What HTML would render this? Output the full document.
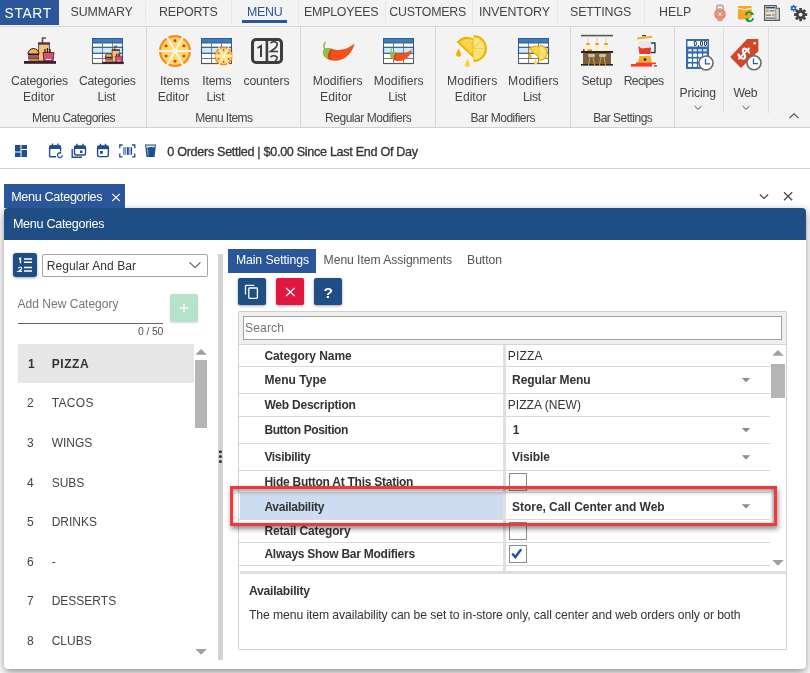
<!DOCTYPE html>
<html><head><meta charset="utf-8">
<style>
html,body{margin:0;padding:0;}
body{will-change:transform;width:810px;height:673px;position:relative;overflow:hidden;background:#fff;font-family:"Liberation Sans",sans-serif;}
.t{position:absolute;white-space:nowrap;line-height:1;}
.r{position:absolute;}
.a{position:absolute;}
</style></head><body>
<div class="r" style="left:0px;top:0px;width:810px;height:26px;background:#f3f3f3;"></div>
<div class="r" style="left:0px;top:26px;width:810px;height:1px;background:#d6d6d6;"></div>
<div class="r" style="left:0px;top:0px;width:59px;height:25px;background:#2b579a;"></div>
<div class="t" style="left:4.60px;top:7px;font-size:13.8px;color:#fff;font-weight:normal;letter-spacing:0.637px;">START</div>
<div class="t" style="left:70.60px;top:6px;font-size:12.4px;color:#444;font-weight:normal;letter-spacing:-0.152px;">SUMMARY</div>
<div class="t" style="left:159.00px;top:6px;font-size:12.4px;color:#444;font-weight:normal;letter-spacing:-0.148px;">REPORTS</div>
<div class="t" style="left:246.90px;top:6px;font-size:12.4px;color:#2b579a;font-weight:normal;letter-spacing:-0.261px;">MENU</div>
<div class="t" style="left:304.10px;top:6px;font-size:12.4px;color:#444;font-weight:normal;letter-spacing:-0.242px;">EMPLOYEES</div>
<div class="t" style="left:389.30px;top:6px;font-size:12.4px;color:#444;font-weight:normal;letter-spacing:-0.244px;">CUSTOMERS</div>
<div class="t" style="left:478.90px;top:6px;font-size:12.4px;color:#444;font-weight:normal;letter-spacing:-0.093px;">INVENTORY</div>
<div class="t" style="left:570.10px;top:6px;font-size:12.4px;color:#444;font-weight:normal;letter-spacing:-0.124px;">SETTINGS</div>
<div class="t" style="left:659.00px;top:6px;font-size:12.4px;color:#444;font-weight:normal;letter-spacing:-0.025px;">HELP</div>
<div class="r" style="left:145px;top:1px;width:1px;height:22px;background:#e6e6e6;"></div>
<div class="r" style="left:231px;top:1px;width:1px;height:22px;background:#e6e6e6;"></div>
<div class="r" style="left:298px;top:1px;width:1px;height:22px;background:#e6e6e6;"></div>
<div class="r" style="left:385px;top:1px;width:1px;height:22px;background:#e6e6e6;"></div>
<div class="r" style="left:472px;top:1px;width:1px;height:22px;background:#e6e6e6;"></div>
<div class="r" style="left:557px;top:1px;width:1px;height:22px;background:#e6e6e6;"></div>
<div class="r" style="left:644px;top:1px;width:1px;height:22px;background:#e6e6e6;"></div>
<div class="r" style="left:242px;top:20px;width:45px;height:3px;background:#2b579a;"></div>
<div class="r" style="left:0px;top:27px;width:810px;height:100px;background:#f3f3f3;"></div>
<div class="r" style="left:0px;top:127px;width:810px;height:1px;background:#d2d2d2;"></div>
<div class="r" style="left:146px;top:27px;width:1px;height:100px;background:#d6d6d6;"></div>
<div class="r" style="left:300px;top:27px;width:1px;height:100px;background:#d6d6d6;"></div>
<div class="r" style="left:435px;top:27px;width:1px;height:100px;background:#d6d6d6;"></div>
<div class="r" style="left:570px;top:27px;width:1px;height:100px;background:#d6d6d6;"></div>
<div class="r" style="left:674px;top:27px;width:1px;height:100px;background:#d6d6d6;"></div>
<div class="r" style="left:723px;top:28px;width:1px;height:85px;background:#dedede;"></div>
<div class="r" style="left:768px;top:28px;width:1px;height:85px;background:#dedede;"></div>
<div class="t" style="left:11.10px;top:75px;font-size:12.2px;color:#444;font-weight:normal;letter-spacing:-0.206px;">Categories</div>
<div class="t" style="left:22.90px;top:91px;font-size:12.2px;color:#444;font-weight:normal;letter-spacing:-0.029px;">Editor</div>
<div class="t" style="left:79.00px;top:75px;font-size:12.2px;color:#444;font-weight:normal;letter-spacing:-0.239px;">Categories</div>
<div class="t" style="left:97.60px;top:91px;font-size:12.2px;color:#444;font-weight:normal;letter-spacing:-0.323px;">List</div>
<div class="t" style="left:160.00px;top:75px;font-size:12.2px;color:#444;font-weight:normal;letter-spacing:-0.074px;">Items</div>
<div class="t" style="left:157.70px;top:91px;font-size:12.2px;color:#444;font-weight:normal;letter-spacing:-0.089px;">Editor</div>
<div class="t" style="left:202.20px;top:75px;font-size:12.2px;color:#444;font-weight:normal;letter-spacing:-0.124px;">Items</div>
<div class="t" style="left:206.40px;top:91px;font-size:12.2px;color:#444;font-weight:normal;letter-spacing:-0.256px;">List</div>
<div class="t" style="left:243.40px;top:75px;font-size:12.2px;color:#444;font-weight:normal;letter-spacing:-0.093px;">counters</div>
<div class="t" style="left:312.70px;top:75px;font-size:12.2px;color:#444;font-weight:normal;letter-spacing:0.056px;">Modifiers</div>
<div class="t" style="left:320.10px;top:91px;font-size:12.2px;color:#444;font-weight:normal;letter-spacing:0.031px;">Editor</div>
<div class="t" style="left:373.80px;top:75px;font-size:12.2px;color:#444;font-weight:normal;letter-spacing:0.056px;">Modifiers</div>
<div class="t" style="left:388.30px;top:91px;font-size:12.2px;color:#444;font-weight:normal;letter-spacing:-0.256px;">List</div>
<div class="t" style="left:447.00px;top:75px;font-size:12.2px;color:#444;font-weight:normal;letter-spacing:0.106px;">Modifiers</div>
<div class="t" style="left:454.80px;top:91px;font-size:12.2px;color:#444;font-weight:normal;letter-spacing:-0.029px;">Editor</div>
<div class="t" style="left:508.10px;top:75px;font-size:12.2px;color:#444;font-weight:normal;letter-spacing:0.143px;">Modifiers</div>
<div class="t" style="left:522.90px;top:91px;font-size:12.2px;color:#444;font-weight:normal;letter-spacing:-0.223px;">List</div>
<div class="t" style="left:581.40px;top:75px;font-size:12.2px;color:#444;font-weight:normal;letter-spacing:-0.215px;">Setup</div>
<div class="t" style="left:623.70px;top:75px;font-size:12.2px;color:#444;font-weight:normal;letter-spacing:-0.622px;">Recipes</div>
<div class="t" style="left:679.40px;top:87px;font-size:12.2px;color:#444;font-weight:normal;letter-spacing:-0.094px;">Pricing</div>
<div class="t" style="left:733.40px;top:87px;font-size:12.2px;color:#444;font-weight:normal;letter-spacing:-0.322px;">Web</div>
<div class="t" style="left:32.00px;top:112px;font-size:12px;color:#444;font-weight:normal;letter-spacing:-0.571px;">Menu Categories</div>
<div class="t" style="left:195.30px;top:112px;font-size:12px;color:#444;font-weight:normal;letter-spacing:-0.556px;">Menu Items</div>
<div class="t" style="left:325.00px;top:112px;font-size:12px;color:#444;font-weight:normal;letter-spacing:-0.459px;">Regular Modifiers</div>
<div class="t" style="left:470.50px;top:112px;font-size:12px;color:#444;font-weight:normal;letter-spacing:-0.466px;">Bar Modifiers</div>
<div class="t" style="left:593.20px;top:112px;font-size:12px;color:#444;font-weight:normal;letter-spacing:-0.525px;">Bar Settings</div>
<svg class="a" style="left:0;top:0" width="810" height="170" viewBox="0 0 810 170"><g transform="translate(24,37) scale(1.0)">
<path d="M18.5 7 V1 H22" stroke="#555" stroke-width="1.6" fill="none"/>
<rect x="14.5" y="6" width="11" height="18" fill="#f6c27a" stroke="#333" stroke-width="0.8"/>
<rect x="14" y="5.5" width="12" height="2.2" fill="#5a2f48"/>
<path d="M4 17 A5.5 5.5 0 0 1 15 17 Z" fill="#f5b04a" stroke="#2a1a22" stroke-width="1"/>
<rect x="4" y="17" width="11" height="1.6" fill="#2a1a22"/>
<rect x="4" y="18.6" width="11" height="2" fill="#c2456a"/>
<rect x="4" y="20.6" width="11" height="1.2" fill="#2a1a22"/>
<rect x="4.5" y="21.8" width="10" height="2.4" fill="#c68a3a"/>
<path d="M21 12 V17 M23.5 11 V17 M26 12 V17" stroke="#2a1a22" stroke-width="1.3"/>
<path d="M19 15.5 H30 L29 24 H20 Z" fill="#d9506f" stroke="#3a1d2d" stroke-width="0.8"/>
<rect x="22" y="22" width="5" height="1" fill="#fff"/>
<rect x="0" y="24" width="32" height="2.8" fill="#3a1d30"/>
</g>
<g transform="translate(92,38)">
<rect x="0.5" y="0.5" width="30" height="25" fill="#fff" stroke="#5a5a5a" stroke-width="1"/>
<rect x="0.5" y="0.5" width="30" height="4.5" fill="#3d7cc0" stroke="#2b5f96" stroke-width="1"/>
<rect x="0.5" y="9.3" width="30" height="6" fill="#cfeafc" stroke="#2d5a80" stroke-width="1.2"/>
<line x1="0.5" y1="20.5" x2="30.5" y2="20.5" stroke="#777" stroke-width="1"/>
<line x1="10.5" y1="0.5" x2="10.5" y2="25.5" stroke="#666" stroke-width="0.8"/>
<line x1="20.5" y1="0.5" x2="20.5" y2="25.5" stroke="#666" stroke-width="0.8"/>
<line x1="0.5" y1="25.5" x2="30.5" y2="25.5" stroke="#555" stroke-width="1.2"/>
</g>
<g transform="translate(102.3,45.7) scale(0.675)">
<path d="M18.5 7 V1 H22" stroke="#555" stroke-width="1.6" fill="none"/>
<rect x="14.5" y="6" width="11" height="18" fill="#f6c27a" stroke="#333" stroke-width="0.8"/>
<rect x="14" y="5.5" width="12" height="2.2" fill="#5a2f48"/>
<path d="M4 17 A5.5 5.5 0 0 1 15 17 Z" fill="#f5b04a" stroke="#2a1a22" stroke-width="1"/>
<rect x="4" y="17" width="11" height="1.6" fill="#2a1a22"/>
<rect x="4" y="18.6" width="11" height="2" fill="#c2456a"/>
<rect x="4" y="20.6" width="11" height="1.2" fill="#2a1a22"/>
<rect x="4.5" y="21.8" width="10" height="2.4" fill="#c68a3a"/>
<path d="M21 12 V17 M23.5 11 V17 M26 12 V17" stroke="#2a1a22" stroke-width="1.3"/>
<path d="M19 15.5 H30 L29 24 H20 Z" fill="#d9506f" stroke="#3a1d2d" stroke-width="0.8"/>
<rect x="22" y="22" width="5" height="1" fill="#fff"/>
<rect x="0" y="24" width="32" height="2.8" fill="#3a1d30"/>
</g>
<circle cx="175" cy="51" r="16" fill="#fb8a1e"/><circle cx="175" cy="51" r="13.76" fill="#ffd85c"/><line x1="158.00" y1="51.00" x2="192.00" y2="51.00" stroke="#f3f3f3" stroke-width="2.24"/><line x1="166.50" y1="36.28" x2="183.50" y2="65.72" stroke="#f3f3f3" stroke-width="2.24"/><line x1="183.50" y1="36.28" x2="166.50" y2="65.72" stroke="#f3f3f3" stroke-width="2.24"/><circle cx="183.87" cy="56.12" r="1.44" fill="#e8262c"/><circle cx="175.00" cy="61.24" r="1.44" fill="#e8262c"/><circle cx="166.13" cy="56.12" r="1.44" fill="#e8262c"/><circle cx="166.13" cy="45.88" r="1.44" fill="#e8262c"/><circle cx="175.00" cy="40.76" r="1.44" fill="#e8262c"/><circle cx="183.87" cy="45.88" r="1.44" fill="#e8262c"/>
<g transform="translate(201,38)">
<rect x="0.5" y="0.5" width="30" height="25" fill="#fff" stroke="#5a5a5a" stroke-width="1"/>
<rect x="0.5" y="0.5" width="30" height="4.5" fill="#3d7cc0" stroke="#2b5f96" stroke-width="1"/>
<rect x="0.5" y="9.3" width="30" height="6" fill="#cfeafc" stroke="#2d5a80" stroke-width="1.2"/>
<line x1="0.5" y1="20.5" x2="30.5" y2="20.5" stroke="#777" stroke-width="1"/>
<line x1="10.5" y1="0.5" x2="10.5" y2="25.5" stroke="#666" stroke-width="0.8"/>
<line x1="20.5" y1="0.5" x2="20.5" y2="25.5" stroke="#666" stroke-width="0.8"/>
<line x1="0.5" y1="25.5" x2="30.5" y2="25.5" stroke="#555" stroke-width="1.2"/>
</g>
<circle cx="223.6" cy="56" r="9.2" fill="#fb8a1e"/><circle cx="223.6" cy="56" r="7.91" fill="#ffd85c"/><line x1="213.40" y1="56.00" x2="233.80" y2="56.00" stroke="#f4f4f4" stroke-width="1.29"/><line x1="218.50" y1="47.17" x2="228.70" y2="64.83" stroke="#f4f4f4" stroke-width="1.29"/><line x1="228.70" y1="47.17" x2="218.50" y2="64.83" stroke="#f4f4f4" stroke-width="1.29"/><circle cx="228.70" cy="58.94" r="0.83" fill="#e8262c"/><circle cx="223.60" cy="61.89" r="0.83" fill="#e8262c"/><circle cx="218.50" cy="58.94" r="0.83" fill="#e8262c"/><circle cx="218.50" cy="53.06" r="0.83" fill="#e8262c"/><circle cx="223.60" cy="50.11" r="0.83" fill="#e8262c"/><circle cx="228.70" cy="53.06" r="0.83" fill="#e8262c"/>
<rect x="252.5" y="39.5" width="29" height="23" rx="3.5" fill="#f1f1f1" stroke="#3d3d3d" stroke-width="3"/>
<rect x="265.6" y="40" width="2.6" height="22" fill="#3d3d3d"/>
<path d="M257.5 48 L261 46 V57" stroke="#3d3d3d" stroke-width="2" fill="none"/>
<path d="M270.5 43 Q274 40.5 277 43 Q278 46 274 49 L270.5 51.5 H278" stroke="#3d3d3d" stroke-width="1.6" fill="none"/>
<path d="M270.5 57 Q274 54.5 277 57 Q277.5 59.5 275 61" stroke="#3d3d3d" stroke-width="1.6" fill="none"/>
<g transform="translate(322,41.5) scale(1.0)">
<path d="M3.5 0.5 C1.5 3 1.8 6 3.2 8" stroke="#8bc34a" stroke-width="1.6" fill="none"/>
<path d="M1 12 C0 7 5 5.5 9 7 C16 10 25 8.5 32.5 2 C31 10 24 19 14 19.2 C7 19.5 2 16 1 12 Z" fill="#f4511e"/>
<path d="M1 12 C0 7 5 5.5 9.5 7.2 L6 16.8 C3 15.5 1.4 14 1 12 Z" fill="#8bc34a"/>
<path d="M9.5 7.2 C7 9 5.5 12 6 16.8 C7.5 17.8 9 18.4 10 18.6 C8 15 8.5 10 11 8 Z" fill="#d84315"/>
</g>
<g transform="translate(383,38)">
<rect x="0.5" y="0.5" width="30" height="25" fill="#fff" stroke="#5a5a5a" stroke-width="1"/>
<rect x="0.5" y="0.5" width="30" height="4.5" fill="#3d7cc0" stroke="#2b5f96" stroke-width="1"/>
<rect x="0.5" y="9.3" width="30" height="6" fill="#cfeafc" stroke="#2d5a80" stroke-width="1.2"/>
<line x1="0.5" y1="20.5" x2="30.5" y2="20.5" stroke="#777" stroke-width="1"/>
<line x1="10.5" y1="0.5" x2="10.5" y2="25.5" stroke="#666" stroke-width="0.8"/>
<line x1="20.5" y1="0.5" x2="20.5" y2="25.5" stroke="#666" stroke-width="0.8"/>
<line x1="0.5" y1="25.5" x2="30.5" y2="25.5" stroke="#555" stroke-width="1.2"/>
</g>
<g transform="translate(389.6,47.8) scale(0.69)">
<path d="M3.5 0.5 C1.5 3 1.8 6 3.2 8" stroke="#8bc34a" stroke-width="1.6" fill="none"/>
<path d="M1 12 C0 7 5 5.5 9 7 C16 10 25 8.5 32.5 2 C31 10 24 19 14 19.2 C7 19.5 2 16 1 12 Z" fill="#f4511e"/>
<path d="M1 12 C0 7 5 5.5 9.5 7.2 L6 16.8 C3 15.5 1.4 14 1 12 Z" fill="#8bc34a"/>
<path d="M9.5 7.2 C7 9 5.5 12 6 16.8 C7.5 17.8 9 18.4 10 18.6 C8 15 8.5 10 11 8 Z" fill="#d84315"/>
</g>
<g transform="translate(455.5,35) scale(1.0)">
<path d="M1 7 Q9 -1.5 18 3.5 L18 23 Z" fill="#f0b400"/>
<path d="M4 7.3 Q10.5 1.5 17 5.2 L17 19.5 Z" fill="#f7d54a"/>
<path d="M17 5.5 L9 6 M17 5.5 L12 12" stroke="#f9e07a" stroke-width="0.7"/>
<path d="M18 0 A13.5 13.5 0 0 1 18 27 Z" fill="#f0b400"/>
<path d="M18 2.3 A11.2 11.2 0 0 1 18 24.7 Z" fill="#f8e47e"/>
<path d="M18 13.5 L29.2 13.5 M18 13.5 L25.9 5.6 M18 13.5 L25.9 21.4 M18 13.5 L18 2.3 M18 13.5 L18 24.7" stroke="#f5cd3a" stroke-width="0.8"/>
<path d="M3.1 13.299999999999999 C1.85 16.099999999999998 0.6000000000000001 18.099999999999998 0.6000000000000001 19.3 A2.5 2.5 0 0 0 5.6 19.3 C5.6 18.099999999999998 4.35 16.099999999999998 3.1 13.299999999999999 Z" fill="#f0b400"/>
<path d="M12 23.5 C10.7 26.299999999999997 9.4 28.299999999999997 9.4 29.5 A2.6 2.6 0 0 0 14.6 29.5 C14.6 28.299999999999997 13.3 26.299999999999997 12 23.5 Z" fill="#f7d54a"/>
</g>
<g transform="translate(518,38)">
<rect x="0.5" y="0.5" width="30" height="25" fill="#fff" stroke="#5a5a5a" stroke-width="1"/>
<rect x="0.5" y="0.5" width="30" height="4.5" fill="#3d7cc0" stroke="#2b5f96" stroke-width="1"/>
<rect x="0.5" y="9.3" width="30" height="6" fill="#cfeafc" stroke="#2d5a80" stroke-width="1.2"/>
<line x1="0.5" y1="20.5" x2="30.5" y2="20.5" stroke="#777" stroke-width="1"/>
<line x1="10.5" y1="0.5" x2="10.5" y2="25.5" stroke="#666" stroke-width="0.8"/>
<line x1="20.5" y1="0.5" x2="20.5" y2="25.5" stroke="#666" stroke-width="0.8"/>
<line x1="0.5" y1="25.5" x2="30.5" y2="25.5" stroke="#555" stroke-width="1.2"/>
</g>
<g transform="translate(528.2,44.5) scale(0.62)">
<path d="M1 7 Q9 -1.5 18 3.5 L18 23 Z" fill="#f0b400"/>
<path d="M4 7.3 Q10.5 1.5 17 5.2 L17 19.5 Z" fill="#f7d54a"/>
<path d="M17 5.5 L9 6 M17 5.5 L12 12" stroke="#f9e07a" stroke-width="0.7"/>
<path d="M18 0 A13.5 13.5 0 0 1 18 27 Z" fill="#f0b400"/>
<path d="M18 2.3 A11.2 11.2 0 0 1 18 24.7 Z" fill="#f8e47e"/>
<path d="M18 13.5 L29.2 13.5 M18 13.5 L25.9 5.6 M18 13.5 L25.9 21.4 M18 13.5 L18 2.3 M18 13.5 L18 24.7" stroke="#f5cd3a" stroke-width="0.8"/>
<path d="M3.1 13.299999999999999 C1.85 16.099999999999998 0.6000000000000001 18.099999999999998 0.6000000000000001 19.3 A2.5 2.5 0 0 0 5.6 19.3 C5.6 18.099999999999998 4.35 16.099999999999998 3.1 13.299999999999999 Z" fill="#f0b400"/>
<path d="M12 23.5 C10.7 26.299999999999997 9.4 28.299999999999997 9.4 29.5 A2.6 2.6 0 0 0 14.6 29.5 C14.6 28.299999999999997 13.3 26.299999999999997 12 23.5 Z" fill="#f7d54a"/>
</g>
<rect x="581" y="34.8" width="32" height="1.6" fill="#5a5448"/>
<rect x="587.4" y="36.4" width="1.4" height="5.6" fill="#ddd"/><rect x="596.3" y="36.4" width="1.4" height="5.6" fill="#ddd"/><rect x="605.3" y="36.4" width="1.4" height="5.6" fill="#ddd"/>
<path d="M585 51 L586.3 45 H589.9 L591.2 51 Z M594 51 L595.3 45 H598.8 L600 51 Z M603 51 L604.3 45 H607.8 L609 51 Z" fill="#fbf1c0"/>
<path d="M586 45 A2.1 2.6 0 0 1 590.2 45 Z M594.9 45 A2.1 2.6 0 0 1 599.1 45 Z M603.9 45 A2.1 2.6 0 0 1 608.1 45 Z" fill="#e3a322"/>
<rect x="583" y="51.5" width="28" height="13" fill="#7a5e40"/>
<rect x="581" y="51" width="32" height="2" fill="#2a2520"/>
<rect x="581" y="64" width="32" height="1.6" fill="#2a2520"/>
<rect x="583" y="49" width="1.6" height="2" fill="#c0282a"/>
<rect x="587.5" y="49.5" width="4.5" height="1.5" fill="#c8922a"/>
<rect x="588" y="54" width="7" height="3" rx="1.2" fill="#c9c2a8"/><rect x="599" y="54" width="7" height="3" rx="1.2" fill="#c9c2a8"/>
<path d="M590 57 L588.3 66 M593 57 L594.7 66 M601 57 L599.3 66 M604 57 L605.7 66" stroke="#d9a030" stroke-width="1.1"/>
<path d="M637 37.5 L652 35.8 L652.3 37.8 L637.3 39.6 Z" fill="#f0b020"/>
<rect x="642" y="35" width="4" height="1.2" fill="#2a3a4a"/>
<path d="M638.5 41 H651 V54 H639.5 Z" fill="#e8e8e8"/>
<path d="M638.3 46 L641.5 48.5 L651 47.5 L650.5 54 H639.5 Z" fill="#ee3526"/>
<path d="M651 43 H655 V52.5 H651" stroke="#2a3a4a" stroke-width="1.4" fill="none"/>
<path d="M639.5 56 H650.5 L652 62.5 H638 Z" fill="#f0b020"/>
<circle cx="645" cy="59.5" r="1.4" fill="#1f2f48"/>
<rect x="636" y="62.5" width="20" height="1.5" fill="#ff3a2a"/>
<rect x="631" y="64" width="21" height="2.6" fill="#ff3a2a"/>
<rect x="654" y="65" width="3" height="1.6" fill="#ff3a2a"/>
<rect x="686" y="39" width="23" height="30" fill="#2f6db5"/>
<rect x="687.5" y="41" width="20" height="5.5" fill="#fff"/>
<text x="707.6" y="46.3" font-family="Liberation Sans" font-weight="bold" font-size="6.4" text-anchor="end" fill="#111" letter-spacing="0.4">0,00</text>
<rect x="688" y="49.0" width="4" height="2.5" rx="1" fill="#d9d4cc"/>
<rect x="688" y="53.5" width="4" height="3.5" rx="1" fill="#fff"/>
<rect x="688" y="58.5" width="4" height="3.5" rx="1" fill="#fff"/>
<rect x="688" y="63.5" width="4" height="3.5" rx="1" fill="#fff"/>
<rect x="693" y="49.0" width="4" height="2.5" rx="1" fill="#d9d4cc"/>
<rect x="693" y="53.5" width="4" height="3.5" rx="1" fill="#fff"/>
<rect x="693" y="58.5" width="4" height="3.5" rx="1" fill="#fff"/>
<rect x="693" y="63.5" width="4" height="3.5" rx="1" fill="#fff"/>
<rect x="698" y="49.0" width="4" height="2.5" rx="1" fill="#d9d4cc"/>
<rect x="698" y="53.5" width="4" height="3.5" rx="1" fill="#fff"/>
<rect x="698" y="58.5" width="4" height="3.5" rx="1" fill="#fff"/>
<rect x="698" y="63.5" width="4" height="3.5" rx="1" fill="#fff"/>
<rect x="703" y="49.0" width="4" height="2.5" rx="1" fill="#d9d4cc"/>
<rect x="703" y="53.5" width="4" height="3.5" rx="1" fill="#fff"/>
<rect x="703" y="58.5" width="4" height="3.5" rx="1" fill="#fff"/>
<rect x="703" y="63.5" width="4" height="3.5" rx="1" fill="#fff"/>
<circle cx="706" cy="63" r="7" fill="#fff" stroke="#6a6a6a" stroke-width="1.6"/><path d="M705.5 58.7 V63.8 H710" stroke="#1f5bb0" stroke-width="1.3" fill="none"/>
<path d="M730.2 56.9 L747.1 39.1 H758.4 V51.2 L740.9 67.9 Z" fill="#d24726"/>
<circle cx="754.6" cy="43.3" r="1.3" fill="#fff"/>
<g transform="translate(744,53.5) rotate(45)"><path d="M3.6 -3.6 C2.6 -5.4 -3.6 -5.6 -3.6 -2.4 C-3.6 0.6 3.6 -0.4 3.6 2.6 C3.6 5.8 -2.8 5.8 -3.9 3.8" stroke="#fff" stroke-width="2.1" fill="none"/><path d="M0 -7.8 V7.8" stroke="#fff" stroke-width="1.8"/></g>
<circle cx="754" cy="62.8" r="7" fill="#fff" stroke="#6a6a6a" stroke-width="1.6"/><path d="M753.5 58.5 V63.599999999999994 H758" stroke="#1f5bb0" stroke-width="1.3" fill="none"/>
<path d="M694.5 106 L698 109.3 L701.5 106" stroke="#555" stroke-width="1" fill="none"/>
<path d="M742.5 106 L746 109.3 L749.5 106" stroke="#555" stroke-width="1" fill="none"/>
<path d="M789.5 118 L794 113.8 L798.5 118" stroke="#555" stroke-width="1.1" fill="none"/>
<g opacity="0.7"><path d="M716.8 11 V7.8 Q716.8 5.3 719 5.3 H721 Q723.2 5.3 723.2 7.8 V11" stroke="#888" stroke-width="1.5" fill="none"/>
<circle cx="720" cy="14.2" r="5.9" fill="#e8604e"/><path d="M718.3 12.4 L721.7 15.8 M721.7 12.4 L718.3 15.8" stroke="#fff" stroke-width="1"/><rect x="717.2" y="19.6" width="5.6" height="1.4" fill="#e8604e"/></g>
<path d="M738 6 H751.5 V17.5 Q745 20.5 738 19 Z" fill="#f5a623"/>
<path d="M738 8.3 Q744.7 11 751.5 8.3" stroke="#fff" stroke-width="1" fill="none"/>
<path d="M745.6 15.2 A3.8 3.8 0 0 1 752.3 13.6" stroke="#1e9b45" stroke-width="1.9" fill="none"/>
<path d="M753.2 18.2 A3.8 3.8 0 0 1 746.5 19.8" stroke="#1e9b45" stroke-width="1.9" fill="none"/>
<path d="M751 11.4 L754.6 14.6 L750.6 15.4 Z M748.6 22 L744.6 18.8 L748.8 18 Z" fill="#1e9b45"/>
<rect x="764.6" y="5.6" width="11.6" height="14.8" fill="#dde6ee" stroke="#555" stroke-width="1.2"/>
<path d="M776.2 8.3 H779.4 V20.4 H776.2" stroke="#555" stroke-width="1.1" fill="#cdd8e2"/>
<rect x="765.8" y="7" width="9.2" height="1.4" fill="#2e4a6a"/>
<rect x="766" y="9.6" width="2.6" height="2.6" fill="#f0a020"/><rect x="769.4" y="10.4" width="5.2" height="1" fill="#555"/>
<rect x="766" y="14.6" width="5" height="1" fill="#555"/><rect x="772" y="13.6" width="2.6" height="2.6" fill="#f0a020"/>
<rect x="766" y="17.6" width="9" height="1" fill="#555"/>
<circle cx="800.6" cy="14.6" r="4.62" fill="#444"/><rect x="799.21" y="8.00" width="2.77" height="3.30" fill="#444" transform="rotate(0.0 800.6 14.6)"/><rect x="799.21" y="8.00" width="2.77" height="3.30" fill="#444" transform="rotate(45.0 800.6 14.6)"/><rect x="799.21" y="8.00" width="2.77" height="3.30" fill="#444" transform="rotate(90.0 800.6 14.6)"/><rect x="799.21" y="8.00" width="2.77" height="3.30" fill="#444" transform="rotate(135.0 800.6 14.6)"/><rect x="799.21" y="8.00" width="2.77" height="3.30" fill="#444" transform="rotate(180.0 800.6 14.6)"/><rect x="799.21" y="8.00" width="2.77" height="3.30" fill="#444" transform="rotate(225.0 800.6 14.6)"/><rect x="799.21" y="8.00" width="2.77" height="3.30" fill="#444" transform="rotate(270.0 800.6 14.6)"/><rect x="799.21" y="8.00" width="2.77" height="3.30" fill="#444" transform="rotate(315.0 800.6 14.6)"/><circle cx="800.6" cy="14.6" r="1.90" fill="#f3f3f3"/>
<circle cx="793.6" cy="8.2" r="2.38" fill="#1e5bbf"/><rect x="792.89" y="4.80" width="1.43" height="1.70" fill="#1e5bbf" transform="rotate(0.0 793.6 8.2)"/><rect x="792.89" y="4.80" width="1.43" height="1.70" fill="#1e5bbf" transform="rotate(60.0 793.6 8.2)"/><rect x="792.89" y="4.80" width="1.43" height="1.70" fill="#1e5bbf" transform="rotate(120.0 793.6 8.2)"/><rect x="792.89" y="4.80" width="1.43" height="1.70" fill="#1e5bbf" transform="rotate(180.0 793.6 8.2)"/><rect x="792.89" y="4.80" width="1.43" height="1.70" fill="#1e5bbf" transform="rotate(240.0 793.6 8.2)"/><rect x="792.89" y="4.80" width="1.43" height="1.70" fill="#1e5bbf" transform="rotate(300.0 793.6 8.2)"/><circle cx="793.6" cy="8.2" r="1.00" fill="#f3f3f3"/></svg>
<div class="r" style="left:0px;top:128px;width:810px;height:40px;background:#fff;"></div>
<div class="r" style="left:0px;top:168px;width:810px;height:1px;background:#d4d4d4;"></div>
<svg class="a" style="left:0;top:0" width="810" height="170" viewBox="0 0 810 170"><rect x="15" y="145" width="5.5" height="6.5" fill="#1f4e8c"/><rect x="21.5" y="145" width="5.5" height="4" fill="#1f4e8c"/><rect x="15" y="152.5" width="5.5" height="4.5" fill="#1f4e8c"/><rect x="21.5" y="150" width="5.5" height="7" fill="#1f4e8c"/><path d="M49.6 156.8 V147.3 Q49.6 145.8 51.1 145.8 H59.1 Q60.6 145.8 60.6 147.3 V151.5 M49.6 156.8 H56" stroke="#1f4e8c" stroke-width="1.4" fill="none"/><rect x="49.6" y="145.8" width="11" height="3.2" fill="#1f4e8c"/><path d="M52.5 143.5 V146.5 M57.8 143.5 V146.5" stroke="#1f4e8c" stroke-width="1.4"/><path d="M62.3 155.2 A2.4 2.4 0 1 1 60.6 152.9" stroke="#1f4e8c" stroke-width="1.2" fill="none"/><path d="M59.6 151.6 L61.6 152.8 L59.8 154.2 Z" fill="#1f4e8c"/><rect x="74.5" y="146" width="11" height="9" rx="1.5" fill="none" stroke="#1f4e8c" stroke-width="1.4"/><rect x="74.5" y="146" width="11" height="3" fill="#1f4e8c"/><path d="M72.2 149 V157.3 H82" stroke="#1f4e8c" stroke-width="1.4" fill="none"/><path d="M77 143.8 V146.5 M83 143.8 V146.5" stroke="#1f4e8c" stroke-width="1.4"/><rect x="80" y="150.5" width="2.5" height="2.5" fill="#1f4e8c"/><rect x="97.6" y="146" width="10.8" height="10.6" rx="1.5" fill="none" stroke="#1f4e8c" stroke-width="1.4"/><rect x="97.6" y="146" width="10.8" height="3.2" fill="#1f4e8c"/><path d="M100.5 143.8 V146.5 M105.5 143.8 V146.5" stroke="#1f4e8c" stroke-width="1.4"/><rect x="100" y="151" width="2.8" height="2.8" fill="#1f4e8c"/><path d="M119.8 148.2 V145 H122.6 M132 145 H134.8 V148.2 M119.8 153.6 V156.8 H122.6 M132 156.8 H134.8 V153.6" stroke="#1f4e8c" stroke-width="1.3" fill="none"/><rect x="123.4" y="147.2" width="1.1" height="7.6" fill="#1f4e8c"/><rect x="125.4" y="147.2" width="0.8" height="7.6" fill="#1f4e8c"/><rect x="127" y="147.2" width="1.8" height="7.6" fill="#1f4e8c"/><rect x="129.6" y="147.2" width="0.8" height="7.6" fill="#1f4e8c"/><rect x="131" y="147.2" width="1.1" height="7.6" fill="#1f4e8c"/><path d="M145 144.5 H156 L154.5 157 H146.5 Z" fill="#1f4e8c"/><path d="M146.2 145.6 H154.8 L154.6 147.4 Q150.5 146.6 146.4 148 Z" fill="#fff" opacity="0.85"/><path d="M147.3 148.5 L148.2 155.6" stroke="#fff" stroke-width="0.7" opacity="0.8"/></svg>
<div class="t" style="left:167.30px;top:146px;font-size:12.6px;color:#333;font-weight:normal;letter-spacing:-0.302px;-webkit-text-stroke:0.3px #333;">0 Orders Settled | $0.00 Since Last End Of Day</div>
<div class="r" style="left:4px;top:208px;width:802px;height:461px;background:#fff;border-radius:4px;box-shadow:0 3px 8px rgba(0,0,0,0.45);"></div>
<div class="r" style="left:4px;top:208px;width:802px;height:32px;background:#1f4e85;border-radius:4px 4px 0 0;"></div>
<div class="t" style="left:12.90px;top:218px;font-size:12.6px;color:#fff;font-weight:normal;letter-spacing:-0.300px;">Menu Categories</div>
<div class="r" style="left:4px;top:184px;width:121px;height:24px;background:#2b579a;"></div>
<div class="t" style="left:11.15px;top:191px;font-size:12.6px;color:#fff;font-weight:normal;letter-spacing:-0.318px;">Menu Categories</div>
<svg class="a" style="left:0;top:170" width="810" height="40" viewBox="0 170 810 40"><path d="M112.3 193.8 L119.8 201 M119.8 193.8 L112.3 201" stroke="#fff" stroke-width="1.05"/><path d="M759.8 194.5 L764 198.5 L768.2 194.5" stroke="#444" stroke-width="1.2" fill="none"/><path d="M784 192.3 L792.2 200.3 M792.2 192.3 L784 200.3" stroke="#444" stroke-width="1.2"/></svg>
<div class="r" style="left:13px;top:253px;width:24px;height:24px;background:#1f4e85;border-radius:3px;box-shadow:0 1px 3px rgba(0,0,0,0.35);"></div>
<svg class="a" style="left:0;top:240px" width="230" height="430" viewBox="0 240 230 430"><path d="M19 259 L20.4 258.2 V263.2" stroke="#fff" stroke-width="1.5" fill="none"/><path d="M18.4 268.4 Q19.2 266.9 20.4 267 Q21.8 267.2 21.6 268.6 Q21.3 269.6 18.4 271.4 H22.2" stroke="#fff" stroke-width="1.2" fill="none"/><path d="M24 259 H32 M24 262.2 H32 M24 267.6 H32 M24 270.9 H32" stroke="#fff" stroke-width="1.5"/><path d="M189.6 262.4 L195 267.6 L200.4 262.4" stroke="#555" stroke-width="1.1" fill="none"/><path d="M184 303.8 V312.2 M179.8 308 H188.2" stroke="#fff" stroke-width="1.4"/><path d="M195.3 354.8 L201.1 349 L206.9 354.8 Z" fill="#a0a0a0"/><path d="M195.3 649 L201.1 654.8 L206.9 649 Z" fill="#a0a0a0"/><circle cx="220.4" cy="451.7" r="1.5" fill="#333"/><circle cx="220.4" cy="456.6" r="1.5" fill="#333"/><circle cx="220.4" cy="461.5" r="1.5" fill="#333"/></svg>
<div class="r" style="left:42px;top:254px;width:164px;height:21px;border:1px solid #a4a4a4;border-radius:2px;"></div>
<div class="t" style="left:46.70px;top:260px;font-size:12px;color:#333;font-weight:normal;letter-spacing:0.096px;">Regular And Bar</div>
<div class="t" style="left:17.60px;top:298px;font-size:12px;color:#757575;font-weight:normal;letter-spacing:0.012px;">Add New Category</div>
<div class="r" style="left:18px;top:323px;width:145px;height:1px;background:#666;"></div>
<div class="t" style="left:138.00px;top:326px;font-size:10.5px;color:#555;font-weight:normal;letter-spacing:-0.176px;">0 / 50</div>
<div class="r" style="left:170px;top:294px;width:28px;height:28px;background:#b5e2c8;border-radius:2px;box-shadow:0 1px 2px rgba(0,0,0,0.15);"></div>
<svg class="a" style="left:170px;top:294px" width="28" height="28"><path d="M14 9.4 V18.4 M9.6 13.9 H18.6" stroke="#fff" stroke-width="1.2"/></svg>
<div class="r" style="left:18px;top:344px;width:176px;height:39px;background:#e6e6e6;"></div>
<div class="t" style="left:27.90px;top:358px;font-size:12px;color:#333;font-weight:bold;letter-spacing:0.000px;">1</div>
<div class="t" style="left:51.70px;top:358px;font-size:12px;color:#333;font-weight:bold;letter-spacing:0.557px;">PIZZA</div>
<div class="t" style="left:26.90px;top:397px;font-size:12px;color:#444;font-weight:normal;letter-spacing:0.000px;">2</div>
<div class="t" style="left:51.70px;top:397px;font-size:12px;color:#444;font-weight:normal;letter-spacing:0.337px;">TACOS</div>
<div class="t" style="left:26.90px;top:437px;font-size:12px;color:#444;font-weight:normal;letter-spacing:0.000px;">3</div>
<div class="t" style="left:51.70px;top:437px;font-size:12px;color:#444;font-weight:normal;letter-spacing:0.000px;">WINGS</div>
<div class="t" style="left:26.90px;top:477px;font-size:12px;color:#444;font-weight:normal;letter-spacing:0.000px;">4</div>
<div class="t" style="left:51.70px;top:477px;font-size:12px;color:#444;font-weight:normal;letter-spacing:0.000px;">SUBS</div>
<div class="t" style="left:26.90px;top:516px;font-size:12px;color:#444;font-weight:normal;letter-spacing:0.000px;">5</div>
<div class="t" style="left:51.70px;top:516px;font-size:12px;color:#444;font-weight:normal;letter-spacing:0.000px;">DRINKS</div>
<div class="t" style="left:26.90px;top:556px;font-size:12px;color:#444;font-weight:normal;letter-spacing:0.000px;">6</div>
<div class="t" style="left:51.70px;top:556px;font-size:12px;color:#444;font-weight:normal;letter-spacing:0.000px;">-</div>
<div class="t" style="left:26.90px;top:595px;font-size:12px;color:#444;font-weight:normal;letter-spacing:0.000px;">7</div>
<div class="t" style="left:51.70px;top:595px;font-size:12px;color:#444;font-weight:normal;letter-spacing:0.000px;">DESSERTS</div>
<div class="t" style="left:26.90px;top:635px;font-size:12px;color:#444;font-weight:normal;letter-spacing:0.000px;">8</div>
<div class="t" style="left:51.70px;top:635px;font-size:12px;color:#444;font-weight:normal;letter-spacing:0.000px;">CLUBS</div>
<div class="r" style="left:195px;top:360px;width:12px;height:68px;background:#b5b5b5;"></div>
<div class="r" style="left:218px;top:254px;width:5px;height:406px;background:#d3d3d3;"></div>
<svg class="a" style="left:215px;top:445px" width="12" height="22" viewBox="215 445 12 22"><circle cx="220.4" cy="451.7" r="1.5" fill="#333"/><circle cx="220.4" cy="456.6" r="1.5" fill="#333"/><circle cx="220.4" cy="461.5" r="1.5" fill="#333"/></svg>
<div class="r" style="left:228px;top:249px;width:88px;height:23.5px;background:#2b579a;"></div>
<div class="t" style="left:235.90px;top:254px;font-size:12.2px;color:#fff;font-weight:normal;letter-spacing:-0.062px;">Main Settings</div>
<div class="t" style="left:323.60px;top:254px;font-size:12.2px;color:#555;font-weight:normal;letter-spacing:-0.073px;">Menu Item Assignments</div>
<div class="t" style="left:467.10px;top:254px;font-size:12.2px;color:#555;font-weight:normal;letter-spacing:-0.070px;">Button</div>
<div class="r" style="left:238.2px;top:277.5px;width:27.5px;height:27.5px;background:#1f4e85;border-radius:2px;box-shadow:0 1px 3px rgba(0,0,0,0.35);"></div>
<div class="r" style="left:276.2px;top:277.5px;width:27.5px;height:27.5px;background:#e2173f;border-radius:2px;box-shadow:0 1px 3px rgba(0,0,0,0.35);"></div>
<div class="r" style="left:314.2px;top:277.5px;width:27.5px;height:27.5px;background:#1f4e85;border-radius:2px;box-shadow:0 1px 3px rgba(0,0,0,0.35);"></div>
<svg class="a" style="left:230px;top:270px" width="130" height="40" viewBox="230 270 130 40"><rect x="248.8" y="288" width="8.6" height="10.4" rx="0.8" fill="none" stroke="#fff" stroke-width="1.3"/><path d="M245.5 294.5 V286.2 Q245.5 285.4 246.3 285.4 H254.3" stroke="#fff" stroke-width="1.3" fill="none"/><path d="M286 288 L294.7 296 M294.7 288 L286 296" stroke="#fff" stroke-width="1.3"/></svg>
<div class="t" style="left:323.40px;top:285px;font-size:15.5px;color:#fff;font-weight:bold;letter-spacing:0.000px;">?</div>
<div class="r" style="left:238px;top:311px;width:547px;height:337px;border:1px solid #d0d0d0;border-radius:1px;"></div>
<div class="r" style="left:239px;top:312px;width:547px;height:32px;background:#f0f0f0;"></div>
<div class="r" style="left:243px;top:316px;width:537px;height:22px;border:1px solid #a0a0a0;background:#fff;"></div>
<div class="t" style="left:245.00px;top:322px;font-size:12.2px;color:#757575;font-weight:normal;letter-spacing:0.095px;">Search</div>
<div class="r" style="left:239px;top:344px;width:547px;height:1px;background:#d6d6d6;"></div>
<div class="r" style="left:239.5px;top:492.5px;width:264px;height:27px;background:#cddcf0;"></div>
<div class="r" style="left:239px;top:365.9px;width:531px;height:1px;background:#d9d9d9;"></div>
<div class="r" style="left:239px;top:393.0px;width:531px;height:1px;background:#d9d9d9;"></div>
<div class="r" style="left:239px;top:416.0px;width:531px;height:1px;background:#d9d9d9;"></div>
<div class="r" style="left:239px;top:443.4px;width:531px;height:1px;background:#d9d9d9;"></div>
<div class="r" style="left:239px;top:470.4px;width:531px;height:1px;background:#d9d9d9;"></div>
<div class="r" style="left:239px;top:491.5px;width:531px;height:1px;background:#d9d9d9;"></div>
<div class="r" style="left:239px;top:518.8px;width:531px;height:1px;background:#d9d9d9;"></div>
<div class="r" style="left:239px;top:541.7px;width:531px;height:1px;background:#d9d9d9;"></div>
<div class="r" style="left:239px;top:564.9px;width:531px;height:1px;background:#d9d9d9;"></div>
<div class="r" style="left:503px;top:345px;width:2.6px;height:227px;background:#e0e0e0;"></div>
<div class="t" style="left:264.40px;top:350px;font-size:12px;color:#333;font-weight:bold;letter-spacing:-0.061px;">Category Name</div>
<div class="t" style="left:507.80px;top:350px;font-size:12px;color:#333;font-weight:normal;letter-spacing:0.146px;">PIZZA</div>
<div class="t" style="left:264.40px;top:374px;font-size:12px;color:#333;font-weight:bold;letter-spacing:0.040px;">Menu Type</div>
<div class="t" style="left:512.10px;top:374px;font-size:12px;color:#333;font-weight:bold;letter-spacing:-0.077px;">Regular Menu</div>
<div class="t" style="left:264.40px;top:399px;font-size:12px;color:#333;font-weight:bold;letter-spacing:-0.212px;">Web Description</div>
<div class="t" style="left:507.80px;top:399px;font-size:12px;color:#333;font-weight:normal;letter-spacing:0.053px;">PIZZA (NEW)</div>
<div class="t" style="left:264.40px;top:424px;font-size:12px;color:#333;font-weight:bold;letter-spacing:-0.381px;">Button Position</div>
<div class="t" style="left:512.70px;top:424px;font-size:12px;color:#333;font-weight:bold;letter-spacing:0.000px;">1</div>
<div class="t" style="left:264.40px;top:451px;font-size:12px;color:#333;font-weight:bold;letter-spacing:-0.327px;">Visibility</div>
<div class="t" style="left:512.10px;top:451px;font-size:12px;color:#333;font-weight:bold;letter-spacing:-0.111px;">Visible</div>
<div class="t" style="left:264.40px;top:476px;font-size:12px;color:#333;font-weight:bold;letter-spacing:-0.252px;">Hide Button At This Station</div>
<div class="t" style="left:264.40px;top:501px;font-size:12px;color:#333;font-weight:bold;letter-spacing:-0.266px;">Availability</div>
<div class="t" style="left:512.10px;top:501px;font-size:12px;color:#333;font-weight:bold;letter-spacing:-0.053px;">Store, Call Center and Web</div>
<div class="t" style="left:264.40px;top:525px;font-size:12px;color:#333;font-weight:bold;letter-spacing:-0.131px;">Retail Category</div>
<div class="t" style="left:264.40px;top:548px;font-size:12px;color:#333;font-weight:bold;letter-spacing:-0.250px;">Always Show Bar Modifiers</div>
<div class="r" style="left:509.2px;top:473.3px;width:15.5px;height:15.5px;border:1px solid #8c8c8c;background:#fff;"></div>
<div class="r" style="left:509.2px;top:522.1px;width:15.5px;height:15.5px;border:1px solid #8c8c8c;background:#fff;"></div>
<div class="r" style="left:509.2px;top:545.2px;width:15.5px;height:15.5px;border:1px solid #8c8c8c;background:#fff;"></div>
<svg class="a" style="left:505px;top:540px" width="30" height="30" viewBox="505 540 30 30"><path d="M512.2 553.6 L515.3 557 L521.2 549.2" stroke="#1a56a8" stroke-width="2.4" fill="none"/></svg>
<div class="r" style="left:771px;top:364px;width:14px;height:34px;background:#b5b5b5;"></div>
<div class="r" style="left:239.5px;top:571px;width:547px;height:2.7px;background:#dedede;"></div>
<svg class="a" style="left:0;top:0" width="810" height="673" viewBox="0 0 810 673"><path d="M741.8 378 H750.2 L746 382.2 Z" fill="#8a8a8a"/><path d="M741.8 428 H750.2 L746 432.2 Z" fill="#8a8a8a"/><path d="M741.8 455.2 H750.2 L746 459.4 Z" fill="#8a8a8a"/><path d="M741.8 504.2 H750.2 L746 508.4 Z" fill="#8a8a8a"/><path d="M772.2 355.8 L778 350 L783.8 355.8 Z" fill="#a0a0a0"/><path d="M772.2 560 L778 565.8 L783.8 560 Z" fill="#a0a0a0"/></svg>
<div class="t" style="left:248.90px;top:585px;font-size:12.2px;color:#333;font-weight:bold;letter-spacing:-0.255px;">Availability</div>
<div class="t" style="left:248.90px;top:609px;font-size:12.2px;color:#333;font-weight:normal;letter-spacing:-0.085px;">The menu item availability can be set to in-store only, call center and web orders only or both</div>
<div class="r" style="left:230px;top:486px;width:541px;height:34px;border:3px solid #ee3a3a;box-shadow:1px 3px 5px rgba(0,0,0,0.45), inset 0 3px 4px rgba(0,0,0,0.3), inset -2px 0 3px rgba(0,0,0,0.2);"></div>
</body></html>
